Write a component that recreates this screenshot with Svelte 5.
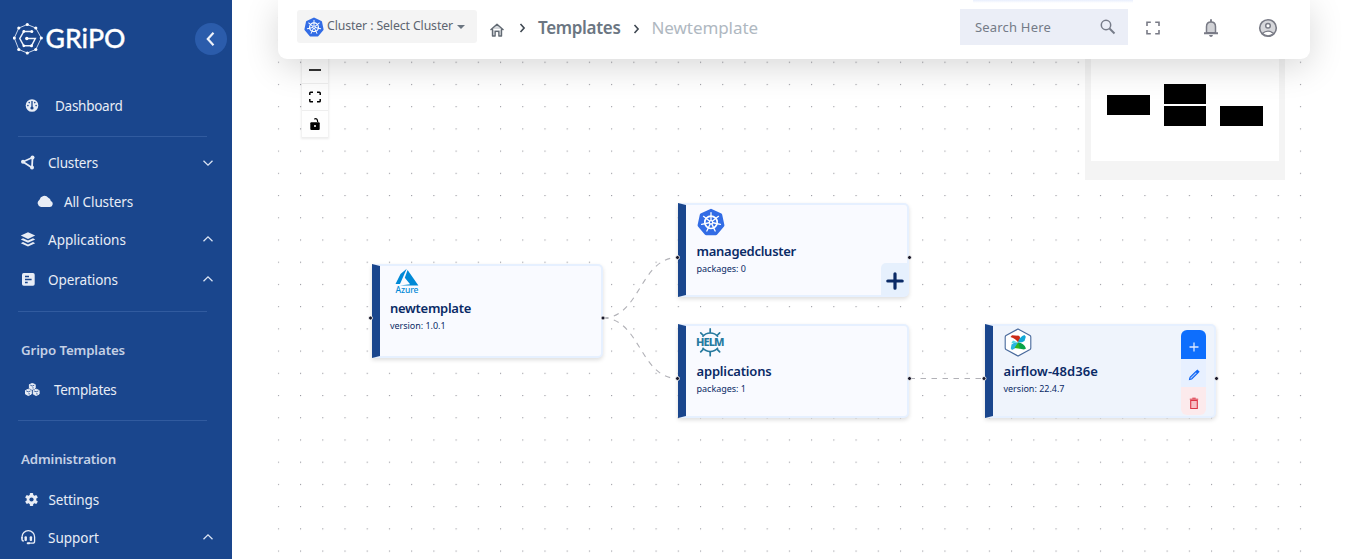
<script>
  // Spreads or tightens a label's tracking so that it fills the given width.
  function fit(el, width) {
    const natural = el.getBoundingClientRect().width;
    const n = el.textContent.length;
    el.style.letterSpacing = `${(width - natural) / n}px`;
  }

  const menu = [
    { label: 'Dashboard', icon: 'gauge', h: 60, ix: 24.5, tx: 55, w: 67.5 },
    { rule: true },
    { label: 'Clusters', icon: 'network', h: 51, ix: 20, tx: 48, w: 50, arrow: 'down' },
    { label: 'All Clusters', icon: 'cloud', h: 28, ix: 37, tx: 64, w: 69 },
    { label: 'Applications', icon: 'layers', h: 48, ix: 20, tx: 48, w: 78, arrow: 'up' },
    { label: 'Operations', icon: 'form', h: 32, ix: 20, tx: 48, w: 70, arrow: 'up' },
    { rule: true, gap: 15 },
    { title: 'Gripo Templates', h: 76, w: 104 },
    { label: 'Templates', icon: 'cubes', h: 4, ix: 24, tx: 54, w: 62.5 },
    { rule: true, gap: 28 },
    { title: 'Administration', h: 76, w: 95 },
    { label: 'Settings', icon: 'gear', h: 6, ix: 24, tx: 48.5, w: 50.5 },
    { label: 'Support', icon: 'headset', h: 70, ix: 20, tx: 48, w: 51, arrow: 'up' }
  ];

  const nodes = [
    { id: 'azure', x: 139.5, y: 263.5, title: 'newtemplate', sub: 'version: 1.0.1', tw: 81, sw: 55.5, pad: 0 },
    { id: 'kube', x: 446, y: 203, title: 'managedcluster', sub: 'packages: 0', tw: 99.5, sw: 49.5, pad: 3 },
    { id: 'helm', x: 446, y: 324, title: 'applications', sub: 'packages: 1', tw: 75, sw: 49.5, pad: 2 },
    { id: 'airflow', x: 753, y: 324, title: 'airflow-48d36e', sub: 'version: 22.4.7', tw: 94.5, sw: 61, pad: 2 }
  ];
  const ports = [[138.5, 318], [371, 318], [445.5, 257.5], [677.5, 257.5], [445.5, 378.5], [677.5, 378.5], [752, 378.5], [984.5, 378.5]];
  const rim = [[14, 1], [22.5, 4.5], [28, 14.5], [22.5, 26], [14, 29.5], [5.5, 26], [1, 14.5], [5.5, 4.5]];
  const spokes = [0, 1, 2, 3, 4, 5, 6].map((i) => (i * 360) / 7);
  const teeth = [-135, -90, -45, 45, 90, 135];
</script>

{#snippet kube(size)}
  <svg width={size} height={size} viewBox="0 0 28 28">
    <path d="M14 .8 24.4 5.6Q25 6 25.2 6.7L27.4 17Q27.5 17.8 27 18.4L20.2 26.6Q19.6 27.3 18.8 27.3H9.2Q8.4 27.3 7.8 26.6L1 18.4Q.5 17.8.6 17L2.8 6.7Q3 6 3.6 5.6Z" fill="#326ce5" />
    <g stroke="#fff" fill="none" transform="translate(14 14.3)">
      <circle r="6.2" stroke-width="1.7" />
      <circle r="1.7" stroke-width="1.2" />
      {#each spokes as a}<path d="M0-2V-9.6" stroke-width="1.3" stroke-linecap="round" transform="rotate({a})" />{/each}
    </g>
  </svg>
{/snippet}

{#snippet menuIcon(name)}
  {#if name === 'gauge'}
    <svg width="14" height="14" viewBox="0 0 14 14"><circle cx="7" cy="6.500" r="6.300" fill="#e8edf6" /><path d="M7 2V8" stroke="#1a468d" stroke-width="1.3" /><circle cx="7" cy="9" r="1.6" fill="#1a468d" /><g fill="#1a468d"><circle cx="4.200" cy="3.600" r=".8" /><circle cx="9.800" cy="3.600" r=".8" /><circle cx="2.9" cy="6.600" r=".8" /><circle cx="11.1" cy="6.600" r=".8" /></g></svg>
  {:else if name === 'network'}
    <svg width="16" height="16" viewBox="0 0 16 16"><path d="M12.5 2.500 3 6.800l9 5.900Z" fill="none" stroke="#e8edf6" stroke-width="1.8" /><g fill="#e8edf6"><circle cx="12.5" cy="2.5" r="2" /><circle cx="3" cy="6.800" r="2" /><circle cx="12" cy="12.600" r="2" /></g></svg>
  {:else if name === 'cloud'}
    <svg width="16" height="14" viewBox="0 0 16 14"><path d="M4 12a4 4 0 0 1-1.500-7.300A5 5 0 0 1 11.300 2.800a3.6 3.6 0 0 1 2.500 3.100A3.200 3.200 0 0 1 13 12Z" fill="#e8edf6" /></svg>
  {:else if name === 'layers'}
    <svg width="16" height="16" viewBox="0 0 16 16"><g fill="#e8edf6"><path d="M8 .3 15.200 3.500 8 6.900.8 3.500Z" /><path d="m3 6.300 5 2.300 5-2.300 2.200 1.100L8 10.800.8 7.400Z" /><path d="m3 10.100 5 2.300 5-2.300 2.200 1.100L8 14.600.8 11.200Z" /></g></svg>
  {:else if name === 'form'}
    <svg width="16" height="16" viewBox="0 0 16 16"><rect x="2" y="1" width="12.7" height="12.7" rx="1.7" fill="#e8edf6" /><path d="M5 4.500h4M5 7.500h6.600M5 10.500h2.700" stroke="#1a468d" stroke-width="1.4" /></svg>
  {:else if name === 'cubes'}
    <svg width="17" height="14" viewBox="0 0 17 14"><g stroke="#e8edf6" fill="#e8edf6"><path d="M8.3.5 11.2 1.600v3.6L8.3 6.600 5.400 5.200V1.600ZM4.400 6.200l2.900 1.300v3.600L4.400 12.500 1.500 11.100V7.500ZM12.200 6.200l2.900 1.300v3.600l-2.900 1.400-2.900-1.400V7.500Z" stroke-width="1" stroke-linejoin="round" /></g><path d="M6.300 2.200l2 .8 2-.8M2.300 8l2.100.8L6.500 8M10.100 8l2.100.8 2.100-.8M9 4.200v1.300M5.100 10v1.500M12.900 10v1.500" stroke="#1a468d" fill="none" stroke-width=".8" /></svg>
  {:else if name === 'gear'}
    <svg width="15" height="15" viewBox="0 0 15 15"><g fill="#e8edf6"><circle cx="7.5" cy="6.500" r="4.800" />{#each [0, 60, 120] as a}<rect x="5.800" y="0" width="3.400" height="13" rx=".8" transform="rotate({a} 7.5 6.5)" />{/each}</g><circle cx="7.5" cy="6.500" r="2.1" fill="#1a468d" /></svg>
  {:else}
    <svg width="16" height="16" viewBox="0 0 16 16"><path d="M2 8.500V7a6.200 6.200 0 0 1 12.600 0V11.200q0 2-2 2H8.500" fill="none" stroke="#e8edf6" stroke-width="1.3" /><rect x="4.500" y="6.200" width="2.4" height="4.800" rx="1" fill="#e8edf6" /><rect x="9.7" y="6.200" width="2.4" height="4.800" rx="1" fill="#e8edf6" /><path d="M2 7v2.500q0 1.500 1.800 1.500" fill="none" stroke="#e8edf6" stroke-width="1.5" /><rect x="6.7" y="12.300" width="3.4" height="2" rx="1" fill="#e8edf6" /></svg>
  {/if}
{/snippet}

<div class="page">
  <aside>
    <div class="brand">
      <svg width="114" height="34" viewBox="0 0 114 34">
        <g transform="translate(.3 1.5)">
          <path d="M14 1 22.5 4.5 28 14.5 22.5 26 14 29.5 5.5 26 1 14.5 5.5 4.5Z" fill="none" stroke="#dbe5f5" stroke-width=".9" />
          {#each rim as [x, y]}<circle cx={x} cy={y} r="1.6" fill="#fff" />{/each}
          <path d="M18.5 8H10.500L6.500 15 10.500 22.3H18.2L22 15H13.5" fill="none" stroke="#eef3fb" stroke-width="1.5" />
          <g fill="#fff"><circle cx="18.5" cy="8" r="1.5" /><circle cx="10.500" cy="8" r="1.4" /><circle cx="13.5" cy="15" r="1.7" /><circle cx="18.2" cy="22.3" r="1.5" /><circle cx="10.500" cy="22.3" r="1.4" /></g>
        </g>
        <text x="32.5" y="26.4" textLength="80" lengthAdjust="spacingAndGlyphs">GRiPO</text>
      </svg>
      <button class="collapse" aria-label="Collapse"><svg width="12" height="16" viewBox="0 0 12 16"><path d="M8.500 1.800 2.800 8 8.500 14.2" fill="none" stroke="#eef2fa" stroke-width="2.2" /></svg></button>
    </div>
    <nav>
      {#each menu as m}
        {#if m.rule}
          <hr style:margin-top="{m.gap ?? 0}px" />
        {:else if m.title}
          <div class="section" style:height="{m.h}px"><span use:fit={m.w}>{m.title}</span></div>
        {:else}
          <div class="item" style:height="{m.h}px" style:padding-left="{m.ix}px">
            <i style:width="{m.tx - m.ix}px">{@render menuIcon(m.icon)}</i>
            <span use:fit={m.w}>{m.label}</span>
            {#if m.arrow}<svg class="arrow" class:up={m.arrow === 'up'} width="12" height="8" viewBox="0 0 12 8"><path d="M1.5 1.8 6 6.2l4.5-4.4" fill="none" stroke="#dbe4f3" stroke-width="1.3" /></svg>{/if}
          </div>
        {/if}
      {/each}
    </nav>
  </aside>

  <main>
    <svg class="board" width="1116" height="559">
      <defs><pattern id="dots" x="45.8" y="61.7" width="22.22" height="22.22" patternUnits="userSpaceOnUse"><circle cx=".6" cy=".6" r=".6" fill="#81818a" /></pattern></defs>
      <rect x="45.8" width="1032" height="559" fill="url(#dots)" />
      <g fill="none" stroke="#b1b1b7" stroke-width="1.1" stroke-dasharray="5.5">
        <path d="M371 318C408 318 408 257.5 445.5 257.5" />
        <path d="M371 318C408 318 408 378.5 445.5 378.5" />
        <path d="M677.5 378.5H752" />
      </g>
    </svg>

    {#each nodes as n}
      <article class="node {n.id}" style:left="{n.x}px" style:top="{n.y}px" style:padding-top="{n.pad}px">
        <div class="logo">
          {#if n.id === 'kube'}{@render kube(28)}
          {:else if n.id === 'azure'}
            <svg width="34" height="28" viewBox="0 0 34 28"><path d="M16.7 1.700 10.5 7.100 5.500 17H10ZM17.6 3 14.8 10.8l5.3 6.5-10.2 1.200H28.4Z" fill="#0089d6" /><text x="5.500" y="25.500" textLength="23" class="az">Azure</text></svg>
          {:else if n.id === 'helm'}
            <svg width="32" height="29" viewBox="0 0 32 29" class="hm"><g fill="none" stroke="#277a9f" stroke-width="1.5"><path d="M7.500 8.800a10 10 0 0 1 15.500 0M7.500 19.800a10 10 0 0 0 15.500 0" />{#each teeth as a}<path d="M10 0H13.400" stroke-linecap="round" stroke-width="1.7" transform="translate(15.2 14.3) rotate({a})" />{/each}</g><text x="1" y="18.400" textLength="28.500">HELM</text></svg>
          {:else}
            <svg width="28" height="29" viewBox="0 0 28 29"><path d="M14 1 26 7.5Q26.8 8 26.8 9V20q0 1-.8 1.5L14 28 2 21.500Q1.200 21 1.200 20V9q0-1 .8-1.500Z" fill="#fff" stroke="#48699c" stroke-width="1.1" /><path d="M14 14.500Q12 10.500 6.500 9L8 7.200 15 7.800Q17.500 10 14 14.500Z" fill="#cb2b18" /><path d="M14 14.500Q15.500 8.500 20.500 7L21.800 8.800 20.500 13Q18 14.800 14 14.500Z" fill="#11a8d8" /><path d="M14 14.500Q20 15 22 20.500L20 21.500 16 20.800Q12.500 19 14 14.500Z" fill="#07a348" /><path d="M14 14.500Q13.500 20 8 22L6.800 20.500 7.500 16.500Q10 14 14 14.500Z" fill="#2bb5e0" /><path d="M14 14.500 7.200 15.300 9 12.600Z" fill="#55d6e5" /><path d="M14 14.500 16 20.800 10.500 20Z" fill="#31b41e" /></svg>
          {/if}
        </div>
        <h3><span use:fit={n.tw}>{n.title}</span></h3>
        <p><span use:fit={n.sw}>{n.sub}</span></p>
        {#if n.id === 'kube'}
          <button class="plus" aria-label="Add"><svg width="18" height="18" viewBox="0 0 18 18"><path d="M9 1.800V16.200M1.800 9H16.200" stroke="#0a2a66" stroke-width="3.200" stroke-linecap="round" /></svg></button>
        {:else if n.id === 'airflow'}
          <div class="tools">
            <button class="add" aria-label="Add"><svg width="12" height="12" viewBox="0 0 12 12"><path d="M6 1.500v9M1.500 6h9" stroke="#dbe8ff" stroke-width="1.300" /></svg></button>
            <button class="edit" aria-label="Edit"><svg width="12" height="12" viewBox="0 0 14 14"><path d="M1.800 12.200 2.400 9.700 9.200 3l1.900 1.900-6.800 6.700ZM10.100 2.200l.8-.7 1.800 1.800-.8.800Z" fill="#a9c9ff" stroke="#1267f3" stroke-width="1.300" /></svg></button>
            <button class="del" aria-label="Delete"><svg width="12" height="13" viewBox="0 0 12 13"><path d="M2.700 3.500h6.600v8H2.700Z" fill="#f7bfc5" stroke="#dc3545" stroke-width="1.100" /><path d="M1.800 2.200h8.400M4.300 1.200h3.400" stroke="#dc3545" stroke-width="1" /></svg></button>
          </div>
        {/if}
      </article>
    {/each}
    <svg class="board" width="1116" height="559">{#each ports as [x, y]}<circle cx={x} cy={y} r="2" fill="#1a192b" stroke="#fff" stroke-width=".8" />{/each}</svg>

    <div class="controls">
      <button aria-label="Zoom out"><svg width="14" height="14" viewBox="0 0 14 14"><path d="M1 7h12" stroke="#000" stroke-width="1.600" /></svg></button>
      <button aria-label="Fit view"><svg width="14" height="14" viewBox="0 0 14 14"><path d="M1.800 5V3q0-.8.8-.8H5M9 2.200h2.400q.8 0 .8.800v2M12.200 9v2q0 .8-.8.8H9M5 11.800H2.600q-.8 0-.8-.8V9" fill="none" stroke="#000" stroke-width="1.500" /></svg></button>
      <button aria-label="Lock"><svg width="14" height="14" viewBox="0 0 14 14"><path d="M6.300 2.100Q9.400.5 9.700 5" fill="none" stroke="#000" stroke-width="1.200" /><rect x="2.300" y="5.200" width="9.400" height="7.800" rx="1" /><circle cx="7" cy="9" r="1" fill="#fff" /></svg></button>
    </div>

    <svg class="minimap" width="200" height="150"><rect width="200" height="150" fill="#f4f4f4" /><rect x="6" width="188" height="131" fill="#fff" /><path d="M22 65h43v20H22ZM79 54h42v20H79ZM79 76h42v20H79ZM135 76h43v20h-43Z" /></svg>

    <header>
      <button class="select">{@render kube(20)}<span use:fit={126}>Cluster : Select Cluster</span><b></b></button>
      <svg class="home" width="16" height="16" viewBox="0 0 16 16"><path d="M1.500 8 8 2.200 14.500 8M3.500 7V14H6.200V9.500H9.800V14H12.500V7" fill="#d5d8dc" stroke="#626a73" stroke-width="1.400" stroke-linejoin="round" /><rect x="6.900" y="10.200" width="2.200" height="5" fill="#fff" /></svg>
      <svg class="sep" width="8" height="12" viewBox="0 0 8 12"><path d="m1.500 2 3.600 4-3.600 4" fill="none" stroke="#3f4852" stroke-width="1.600" /></svg>
      <strong><span use:fit={82.5}>Templates</span></strong>
      <svg class="sep second" width="8" height="12" viewBox="0 0 8 12"><path d="m1.500 2 3.600 4-3.600 4" fill="none" stroke="#3f4852" stroke-width="1.600" /></svg>
      <em><span use:fit={106.5}>Newtemplate</span></em>
      <div class="search"><span use:fit={76}>Search Here</span><svg width="18" height="18" viewBox="0 0 18 18"><circle cx="7" cy="7" r="4.700" fill="none" stroke="#777c89" stroke-width="1.500" /><path d="m10.500 10.500 5 5" stroke="#777c89" stroke-width="1.900" /></svg></div>
      <svg class="full" width="16" height="16" viewBox="0 0 16 16"><path d="M2 6V2.200H5.800M10.200 2.200H14V6M14 10v3.800h-3.800M5.800 13.800H2V10" fill="none" stroke="#797b86" stroke-width="1.600" /></svg>
      <svg class="bell" width="18" height="20" viewBox="0 0 18 20"><path d="M4.500 14.800V8.700Q4.500 4 9 4t4.500 4.700v6.100Z" fill="#d1d2d6" stroke="#797b86" stroke-width="1.500" /><path d="M2 15.300h14M9 1.300V4" stroke="#797b86" stroke-width="1.900" /><path d="M7 17h4q-.5 1.900-2 1.900T7 17" fill="#797b86" /></svg>
      <svg class="user" width="20" height="20" viewBox="0 0 20 20"><circle cx="10" cy="10" r="8.300" fill="#d6d7db" stroke="#797b86" stroke-width="1.600" /><path d="M4.200 15.600Q10 10.700 15.800 15.600 10 20 4.200 15.600Z" fill="#fff" stroke="#797b86" stroke-width="1.300" /><circle cx="10" cy="7.700" r="2.300" fill="#fff" stroke="#797b86" stroke-width="1.500" /></svg>
      <div class="glow"></div>
    </header>
  </main>
</div>

<style>
  :global(body) { font-family: 'Noto Sans', 'Open Sans', sans-serif; background: #fff; overflow: hidden; }
  .page { display: flex; height: 559px; overflow: hidden; }
  svg { display: block; flex: none; }
  span { white-space: nowrap; }
  button { border: 0; padding: 0; margin: 0; font: inherit; display: flex; align-items: center; justify-content: center; }
  aside { width: 232px; flex: none; background: #1a468d; color: #e8edf6; }
  .brand { height: 76px; box-sizing: border-box; padding: 1px 5px 0 13px; display: flex; align-items: center; justify-content: space-between; }
  .brand text { font: 500 26px Lato, sans-serif; fill: #fff; stroke: #fff; stroke-width: .3px; }
  .collapse { width: 32px; height: 32px; border-radius: 50%; background: #2b5cab; }
  nav { display: flex; flex-direction: column; }
  .item { display: flex; align-items: center; flex: none; font-size: 13.500px; }
  .item i { display: flex; flex: none; }
  .arrow { margin: 0 18px 0 auto; }
  .up { transform: translateY(-1px) rotate(180deg); }
  hr { width: 189px; height: 1px; border: 0; margin: 0 0 0 18px; background: #315b9f; flex: none; }
  .section { display: flex; align-items: center; flex: none; padding-left: 21px; font-size: 13.300px; font-weight: 600; color: #c4d0e5; }

  main { position: relative; flex: 1; overflow: hidden; }
  .board { position: absolute; left: 0; top: 0; }
  .node { position: absolute; box-sizing: border-box; width: 231px; height: 94px; padding-left: 10.500px; border: 2px solid #e6f0ff; border-left: 8px solid #1a468d; border-radius: 0 5px 5px 0; background: #f9faff; box-shadow: 0 2px 4px #0002; color: #0a2a66; }
  .airflow { background: #eff4fc; }
  .logo { height: 32px; display: flex; align-items: flex-start; }
  .azure .logo { padding-top: 1px; }
  .az { font: 500 8.500px 'Noto Sans', sans-serif; fill: #0089d6; }
  .hm { margin-left: -2px; }
  .hm text { font: 800 11px 'Noto Sans', sans-serif; fill: #277a9f; }
  h3 { margin: 0; font-size: 13px; line-height: 22px; font-weight: 600; height: 22px; }
  p { margin: 0; font-size: 9px; line-height: 14px; }
  .azure h3 { margin-top: -2px; }
  .plus { position: absolute; right: -1px; bottom: 0; width: 27px; height: 32px; padding-top: 4px; background: #e6f0fd; border-radius: 5px 0 0; }
  .tools { position: absolute; right: 8px; top: 4px; width: 25px; border-radius: 6px; overflow: hidden; }
  .tools button { box-sizing: border-box; width: 25px; height: 28px; }
  .tools .add { background: #0d6efd; height: 29px; padding-top: 5px; }
  .tools .edit { background: #e7f0ff; padding-top: 4px; }
  .tools .del { background: #fceaec; padding-top: 5px; }

  .controls { position: absolute; left: 70px; top: 57px; width: 26px; box-shadow: 0 0 2px 1px #00000014; }
  .controls button { box-sizing: border-box; width: 26px; height: 27px; background: #fefefe; border-bottom: 1px solid #eee; }
  .minimap { position: absolute; left: 853px; top: 30px; }

  header { position: absolute; left: 46px; top: 0; width: 1032px; height: 59px; box-sizing: border-box; display: flex; align-items: center; padding: 0 32px 4px 19px; border-radius: 0 0 9px 9px; background: #fff; box-shadow: 0 8px 34px #00000028; overflow: visible; }
  .select { box-sizing: border-box; width: 180px; height: 33px; margin-top: -2px; padding: 0 10px 0 7px; background: #f4f4f4; border-radius: 3px; color: #5d6570; font-size: 12.300px; justify-content: flex-start; flex: none; }
  .select span { margin: -3px 0 0 3px; }
  .select b { border: 4px solid transparent; border-top-color: #6b7580; border-bottom: 0; margin-left: 4px; }
  .home { margin: 4px 0 0 12px; }
  .sep { margin: 1px 0 0 14px; }
  strong { margin-left: 11px; font-size: 17px; font-weight: 600; color: #6b7682; }
  .second { margin-left: 12px; margin-top: 3px; }
  em { margin-left: 11px; font-size: 17px; font-style: normal; color: #afb8c1; }
  .search { width: 168px; height: 36px; box-sizing: border-box; margin-left: auto; margin-top: -1px; padding: 0 11px 0 15px; background: #ebeef7; display: flex; align-items: center; justify-content: space-between; font-size: 13px; color: #747b87; }
  .full { margin-left: 17px; }
  .bell { margin-left: 41px; }
  .user { margin-left: 38px; }
  .glow { position: absolute; top: 0; left: 695px; width: 160px; height: 3px; background: linear-gradient(#e9effd, #fff); }
</style>
